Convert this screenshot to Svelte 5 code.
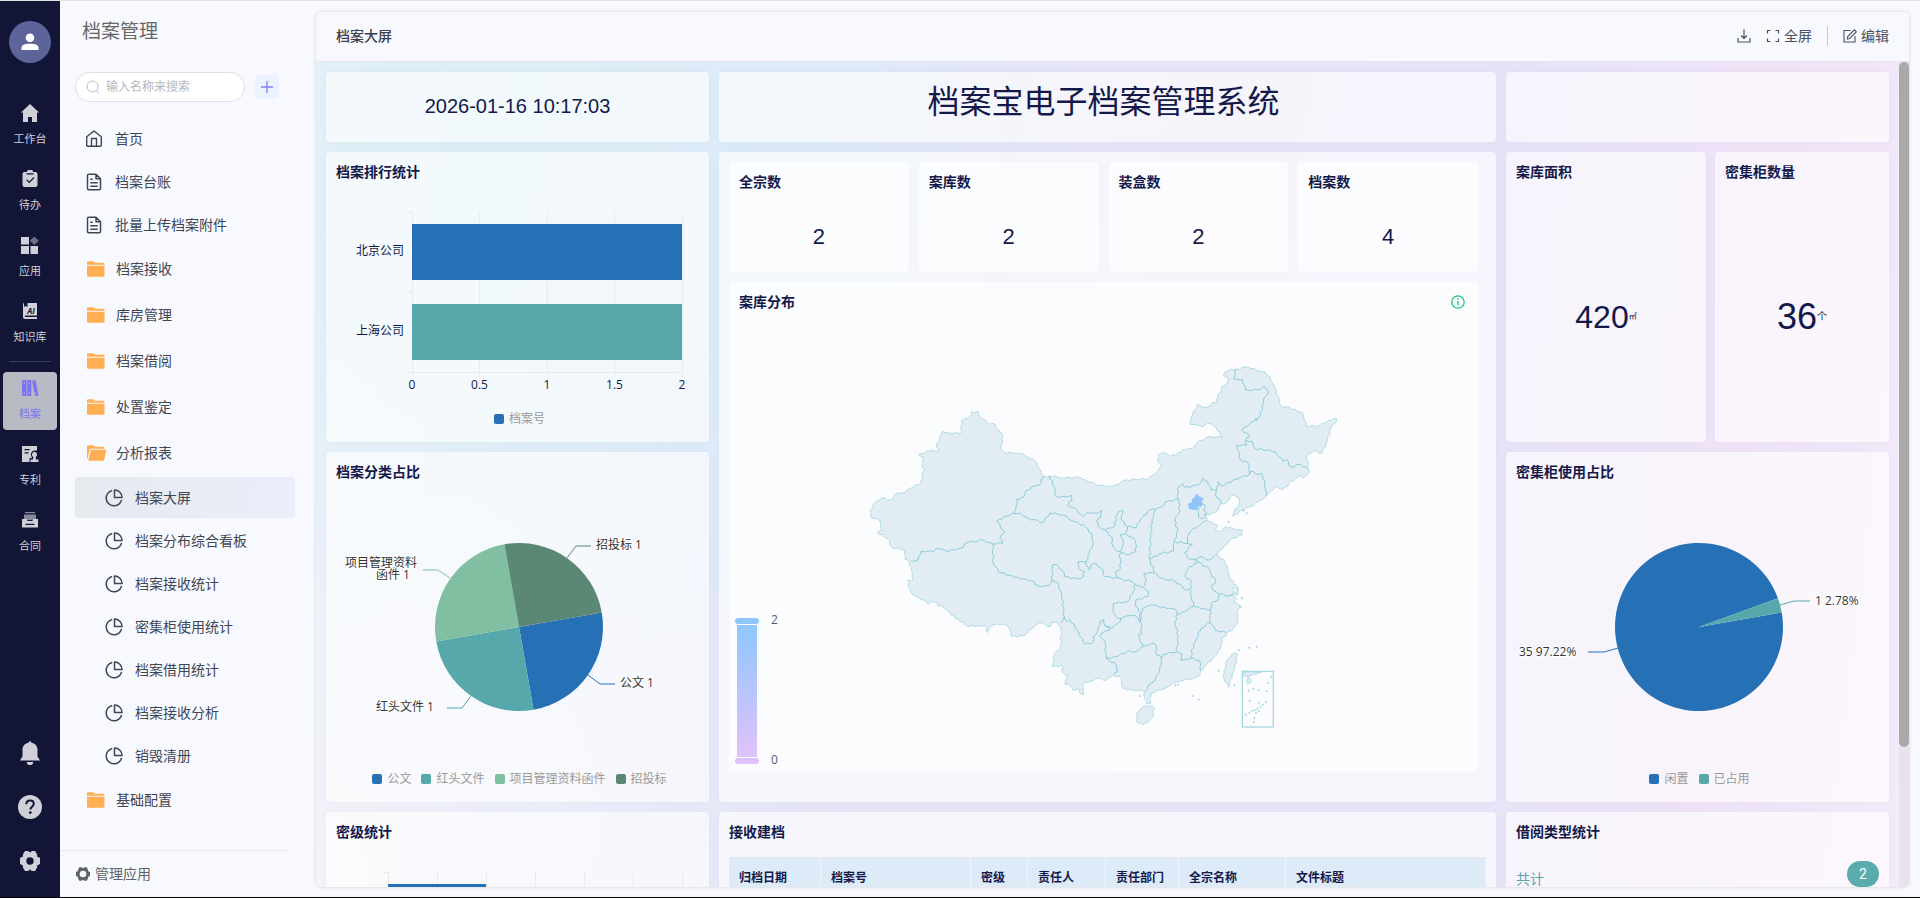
<script>
  let keyword = $state('');
  let activeItem = $state('档案大屏');

  const rail = [
    { label: '工作台', icon: 'house' },
    { label: '待办', icon: 'todo' },
    { label: '应用', icon: 'apps' },
    { label: '知识库', icon: 'book' },
    { divider: true },
    { label: '档案', icon: 'archive', active: true },
    { label: '专利', icon: 'patent' },
    { label: '合同', icon: 'contract' },
  ];

  const menu = [
    { label: '首页', icon: 'home' },
    { label: '档案台账', icon: 'doc' },
    { label: '批量上传档案附件', icon: 'doc' },
    { label: '档案接收', icon: 'folder', folder: true },
    { label: '库房管理', icon: 'folder', folder: true },
    { label: '档案借阅', icon: 'folder', folder: true },
    { label: '处置鉴定', icon: 'folder', folder: true },
    { label: '分析报表', icon: 'folderOpen', folder: true },
    { label: '档案大屏', icon: 'pie', child: true },
    { label: '档案分布综合看板', icon: 'pie', child: true },
    { label: '档案接收统计', icon: 'pie', child: true },
    { label: '密集柜使用统计', icon: 'pie', child: true },
    { label: '档案借用统计', icon: 'pie', child: true },
    { label: '档案接收分析', icon: 'pie', child: true },
    { label: '销毁清册', icon: 'pie', child: true },
    { label: '基础配置', icon: 'folder', folder: true },
  ];

  const counts = [
    { label: '全宗数', value: 2 },
    { label: '案库数', value: 2 },
    { label: '装盒数', value: 2 },
    { label: '档案数', value: 4 },
  ];

  const BLUE = '#2671b6';
  const TEAL = '#56a8aa';
  const GREEN = '#81bfa2';
  const DARK = '#5b8875';

  const bars = [
    { label: '北京公司', value: 2, color: BLUE },
    { label: '上海公司', value: 2, color: TEAL },
  ];

  const typePie = {
    slices: [
      { from: -10, to: 80, color: BLUE, line: '262,183 274,192 289,192', texts: [[294, 195, '公文 1']] },
      { from: 80, to: 170, color: TEAL, line: '145,204 136,216 121,216', texts: [[50, 219, '红头文件 1']] },
      { from: 170, to: 260, color: GREEN, line: '124,86 112,78 97,78', texts: [[19, 75, '项目管理资料'], [50, 87, '函件 1']] },
      { from: 260, to: 350, color: DARK, line: '241,66 250,54 265,54', texts: [[270, 57, '招投标 1']] },
    ],
    legend: [['公文', BLUE], ['红头文件', TEAL], ['项目管理资料函件', GREEN], ['招投标', DARK]],
  };

  const cabinetPie = {
    slices: [
      { from: -10, to: 340, color: BLUE, line: '112,156 98,160 82,160', texts: [[13, 164, '35 97.22%']] },
      { from: 340, to: 350, color: TEAL, line: '274,113 288,109 304,109', texts: [[309, 113, '1 2.78%']] },
    ],
    legend: [['闲置', BLUE], ['已占用', TEAL]],
  };

  const columns = [
    ['归档日期', 92], ['档案号', 150], ['密级', 57], ['责任人', 78],
    ['责任部门', 73], ['全宗名称', 107], ['文件标题', 200],
  ];

  function slicePath(s, cx = 193, cy = 135, r = 84) {
    const p = (deg) => {
      const a = (deg * Math.PI) / 180;
      return `${(cx + r * Math.cos(a)).toFixed(2)} ${(cy + r * Math.sin(a)).toFixed(2)}`;
    };
    const large = s.to - s.from > 180 ? 1 : 0;
    return `M${cx} ${cy}L${p(s.from)}A${r} ${r} 0 ${large} 1 ${p(s.to)}Z`;
  }

  // breaks long straight edges into small uneven steps, so borders look natural
  function rough(str, close = false) {
    const n = str.split(/[ ,]+/).map(Number);
    const pts = [];
    for (let i = 0; i < n.length; i += 2) pts.push([n[i], n[i + 1]]);
    if (close) pts.push(pts[0]);
    let d = `M${pts[0]}`;
    for (let i = 1; i < pts.length; i++) {
      const [ax, ay] = pts[i - 1];
      const [bx, by] = pts[i];
      const len = Math.hypot(bx - ax, by - ay);
      const steps = Math.max(1, Math.round(len / 9));
      for (let k = 1; k < steps; k++) {
        const t = k / steps;
        const off = Math.sin(ax * 3.1 + by * 1.7 + k * 2.3) * 3;
        d += `L${(ax + (bx - ax) * t - ((by - ay) / len) * off).toFixed(1)} ${(ay + (by - ay) * t + ((bx - ax) / len) * off).toFixed(1)}`;
      }
      d += `L${bx} ${by}`;
    }
    return close ? d + 'Z' : d;
  }

  const outline = rough(
    '60 482 70 463 88 450 105 443 112 452 130 447 136 433 155 430 180 415 213 400 217 375 225 360 217 345 218 320 206 313 240 303 266 303 259 290 268 268 278 244 300 250 334 248 334 212 345 204 360 202 363 186 384 184 386 195 400 208 412 218 436 224 447 243 458 255 458 280 452 295 460 305 490 310 520 312 540 326 556 333 560 348 572 362 581 379 598 378 640 384 690 382 712 393 735 402 772 411 795 405 830 390 895 386 915 372 935 350 923 335 926 315 940 308 955 316 978 317 998 299 1030 294 1042 277 1080 260 1117 262 1110 245 1092 228 1072 219 1058 230 1040 224 1018 222 1028 195 1043 163 1055 170 1070 172 1086 159 1102 158 1103 143 1118 108 1134 97 1133 82 1120 76 1135 62 1158 57 1195 50 1220 60 1245 66 1260 80 1274 115 1285 140 1293 168 1335 177 1360 193 1368 228 1405 229 1435 211 1460 207 1452 222 1442 235 1432 272 1416 309 1390 302 1370 316 1376 358 1372 375 1358 385 1352 375 1335 385 1316 402 1300 418 1276 410 1262 424 1248 438 1232 450 1213 465 1190 472 1168 485 1148 499 1152 487 1168 462 1168 445 1155 436 1140 440 1130 458 1114 461 1100 485 1080 493 1065 490 1070 512 1092 522 1104 527 1097 540 1110 545 1125 530 1148 535 1177 541 1177 555 1150 563 1125 585 1110 600 1098 613 1125 635 1135 665 1142 690 1160 706 1164 728 1150 712 1145 722 1165 733 1143 735 1160 745 1150 755 1170 768 1162 780 1165 800 1158 825 1150 835 1130 850 1115 868 1112 895 1090 925 1075 938 1056 962 1050 975 1030 985 1000 992 980 995 955 1010 930 1020 903 1028 903 1040 895 1045 902 1060 890 1062 884 1045 884 1025 870 1020 830 1020 815 1005 815 985 790 975 770 990 745 985 720 995 703 995 697 1010 702 1033 690 1031 684 1015 668 1020 660 1007 646 1003 650 975 638 968 635 945 608 950 613 915 633 890 633 840 620 815 606 815 600 830 572 818 550 830 520 858 484 859 480 840 468 825 442 821 420 830 412 848 405 825 380 830 345 825 325 808 303 795 300 785 250 755 235 763 220 750 190 735 178 715 173 690 190 690 185 660 178 635 165 628 163 600 125 592 112 565 82 548 96 540 88 510 65 504',
    true
  );

  const borders = [
    '183 633 205 630 215 603 250 605 265 595 290 604 330 595 355 577 400 570 428 582',
    '428 582 458 580 450 562 463 548 440 512 490 490',
    '490 490 498 470 500 448 522 440 530 420 555 408 575 400 572 390 581 379',
    '598 378 612 410 614 430 627 443 665 436 667 450 653 465 680 480 700 500 712 487 735 490 755 482 752 495 740 515 745 530 765 540',
    '765 540 795 528 797 500 805 486 818 482 815 510 832 530 827 550 810 555 820 575 812 605 795 598 785 580 785 560 765 540',
    '832 530 860 532 870 510 900 480 917 478 935 470 945 457 985 447',
    '827 550 858 572 857 605 838 613 810 610 812 655 797 665 803 683',
    '490 490 515 493 535 505 580 517 600 488 640 495 665 512 700 525 725 550 730 580 718 610 708 635 683 637 687 655 705 665 700 680 683 687 645 680 635 660 620 643 608 645 606 690',
    '428 582 430 640 445 665 495 682 545 692 570 712 598 706 606 690',
    '708 635 715 660 730 640 755 655 765 680 797 683 845 695 855 702',
    '606 690 620 695 635 730 643 800 633 820',
    '643 800 650 815 660 808 680 840 705 883 728 878 730 860 742 845 750 815 762 808 765 828',
    '855 702 850 725 832 755 790 760 788 785 805 805 835 797 855 797 868 815 872 790 858 770 858 750 893 740 893 722 880 712 855 702',
    '880 712 890 690 882 670 914 668',
    '914 668 898 627 903 560 905 510 917 478',
    '898 627 935 610 970 603 973 575 983 545 975 510 990 485 985 447',
    '985 447 982 415 998 400 1003 413 1045 405 1060 385 1073 395 1083 420 1100 422 1104 395 1117 408 1155 388 1198 373',
    '1100 422 1098 440 1108 447 1112 461',
    '1198 373 1203 363 1218 373 1235 370 1245 400 1248 438',
    '1198 373 1195 340 1172 330 1160 285 1190 287 1187 270',
    '1187 270 1208 275 1215 295 1275 305 1300 335 1310 328 1322 352 1352 343 1376 358',
    '1187 270 1200 258 1176 240 1200 222 1218 205 1220 212 1238 180 1240 150 1255 125 1240 110 1225 120 1187 120 1178 90 1150 85 1158 57',
    '1070 512 1045 528 1030 535 1012 560 1012 580 1028 582 1003 608 1018 627 1030 628 1050 620 1078 630 1098 613',
    '973 575 1012 580',
    '1030 628 1040 640 1018 650 1005 678 1025 695 1020 718 1025 740 1030 770 1080 780 1090 755 1105 750 1108 732',
    '914 668 930 685 975 693 1010 720 1020 718',
    '1108 732 1085 715 1098 688 1085 680 1075 652 1058 648 1040 628',
    '1108 732 1135 738 1150 728',
    '872 790 878 775 905 765 950 775 975 778 982 792 1000 785 1030 770',
    '982 792 975 815 985 860 980 905 995 910 992 930 1022 925',
    '1080 780 1080 815 1095 840 1128 848',
    '1080 818 1053 835 1040 865 1030 885 1022 925 1048 932 1052 962',
    '980 905 940 912 935 925 920 915 918 885 905 880 878 890',
    '872 790 875 850 865 855 878 890 862 905 830 905 800 920 768 925',
    '768 925 765 875 750 860 760 848 780 840 765 828 785 835 805 820 812 805',
    '768 925 800 945 803 965 790 975',
    '935 925 935 945 918 985 903 1000 884 1025',
    '1055 460 1065 465 1060 480 1070 490 1060 505 1045 500 1047 475 1055 460',
  ].map((b) => rough(b)).join('');

  const hainan = rough('880 1070 905 1066 914 1075 905 1105 880 1126 860 1115 860 1088', true);
  const taiwan = rough('1152 909 1162 912 1155 955 1140 990 1136 1012 1122 985 1122 960 1135 925', true);
  const beijing = 'M1040 432l6 8 14 6-6 8 2 12-12 2-4 11-22-3-2-15 12-3-2-9 8-5z';

  const islets = [
    [1190, 490], [1180, 482], [1136, 516], [1172, 770], [1176, 745], [1166, 900], [1198, 893], [1221, 890],
    [1106, 962], [1153, 1006], [1028, 1038], [1046, 1049], [870, 1038], [984, 1004], [976, 1006],
    [1196, 1022], [1210, 1016], [1226, 1020], [1250, 1024], [1255, 1000], [1264, 980], [1199, 1052],
    [1226, 1058], [1248, 1055], [1238, 1064], [1231, 1070], [1222, 1076], [1214, 1080], [1226, 1084],
    [1218, 1088], [1207, 1083], [1198, 1088], [1188, 1094], [1213, 1104], [1211, 1116],
  ];
</script>

{#snippet icon(name)}
  {#if name === 'house'}
    <svg class="ic" width="18" height="18" viewBox="0 0 18 18"><path fill="currentColor" d="M9 0 0 8.6h2V18h5v-5h4v5h5V8.6h2z" /></svg>
  {:else if name === 'todo'}
    <svg class="ic" width="18" height="18" viewBox="0 0 18 18"><path fill="currentColor" d="M6 1.500A1.500 1.500 0 0 1 7.500 0h3A1.500 1.500 0 0 1 12 1.500V2h2.500A2 2 0 0 1 16.500 4v11a2 2 0 0 1-2 2h-11a2 2 0 0 1-2-2V4a2 2 0 0 1 2-2H6z" /><path d="M5.500 3.800h7M5.500 9.700l2.700 2.800 4.800-5" fill="none" stroke="#121536" stroke-width="1.200" /></svg>
  {:else if name === 'apps'}
    <svg class="ic" width="18" height="18" viewBox="0 0 18 18"><path fill="currentColor" d="M0 1h8v7.500H0zM0 10h8v8H0zM9.500 10H17v8H9.500z" /><path fill="#6d6f8a" d="m13.300.5 4.500 4.200-4.500 4.200L8.800 4.700z" /></svg>
  {:else if name === 'book'}
    <svg class="ic" width="18" height="18" viewBox="0 0 18 18"><path fill="currentColor" d="M2 2.500C2 1.600 2.500 1 3 1v4l1.700-1L6.500 5V1H16v12.500H4.500c-1 0-1 1.500 0 1.500H16v2H4c-1.200 0-2-.8-2-2z" /><text x="10" y="12" text-anchor="middle" font-size="8" font-weight="700" font-style="italic" fill="#121536">AI</text></svg>
  {:else if name === 'archive'}
    <svg class="ic" width="18" height="18" viewBox="0 0 18 18"><path fill="currentColor" fill-rule="evenodd" d="M1 1h4.500v16H1zM2.500 3.500v1.200H4V3.500zm0 10v1.200H4v-1.200zM6.300 1h4v16h-4zm1.300 2.500v1.200H9V3.500zm0 10v1.200H9v-1.200zM11 1.700 14.400 1 17.500 16.400 14 17zm2.700 11.800.3 1.300 1.200-.2-.3-1.300z" /></svg>
  {:else if name === 'patent'}
    <svg class="ic" width="18" height="18" viewBox="0 0 18 18"><path fill="currentColor" fill-rule="evenodd" d="M1 1h15v4.500h-2.500a4 4 0 0 0-3.300 5.500l.8 2H8.500v4H1zM3.500 4v1.300h5V4zm0 3.300v1.300h4V7.300z" /><path fill="currentColor" d="M13.500 6.800a2.800 2.800 0 0 1 1.200 5.200l.3 2.500h2.500V17h-8v-2.500H12l.3-2.500a2.800 2.800 0 0 1 1.200-5.200z" /></svg>
  {:else if name === 'contract'}
    <svg class="ic" width="18" height="18" viewBox="0 0 18 18"><path fill="#85879b" d="M4 1h10v1.300H4zM3 3.500h12V9H3z" /><path fill="currentColor" fill-rule="evenodd" d="M1 8h4.500l1.200 2h4.600l1.200-2H17v8.500H1zm3.500 4.800V14h9v-1.200z" /></svg>
  {:else if name === 'home'}
    <svg class="ic" width="18" height="18" viewBox="0 0 18 18" fill="none" stroke="currentColor" stroke-width="1.400" stroke-linejoin="round"><path d="M1.700 6.700 9 1l7.300 5.700v8.600a1 1 0 0 1-1 1H2.700a1 1 0 0 1-1-1zM6.500 16V8.500h5V16" /></svg>
  {:else if name === 'doc'}
    <svg class="ic" width="18" height="18" viewBox="0 0 18 18" fill="none" stroke="currentColor" stroke-width="1.500" stroke-linejoin="round"><path d="M11 1.200H3.800a1.300 1.300 0 0 0-1.300 1.300v13a1.300 1.300 0 0 0 1.300 1.300h10.400a1.300 1.300 0 0 0 1.300-1.300V5.700zM11 1.200v4.500h4.500M5.300 6.200h2.500M5.300 9.700h7.400M5.300 13.200h7.400" /></svg>
  {:else if name === 'folder'}
    <svg class="ic" width="18" height="18" viewBox="0 0 18 18"><path fill="#ffae52" d="M0 2.200a1 1 0 0 1 1-1h5l2 1.600h8.500a1 1 0 0 1 1 1v.9H0zM0 5.800h17.500v10a1 1 0 0 1-1 1H1a1 1 0 0 1-1-1z" /></svg>
  {:else if name === 'folderOpen'}
    <svg class="ic" width="18" height="18" viewBox="0 0 18 18" overflow="visible"><path fill="#ffae52" d="M0 2.200a1 1 0 0 1 1-1h5l2 1.600h8.500a1 1 0 0 1 1 1v.9H3L.6 14.500 0 15zM4 5.800h15.500l-2.600 11H1.200z" /></svg>
  {:else if name === 'pie'}
    <svg class="ic" width="18" height="18" viewBox="0 0 18 18" fill="none" stroke="currentColor" stroke-width="1.500"><path d="M7.200 1.400a7.800 7.800 0 1 0 9.400 9.400" /><path stroke-linejoin="round" d="M9.500 1a7.600 7.600 0 0 1 7.600 7.600H9.500z" /></svg>
  {/if}
{/snippet}

{#snippet pieChart(chart)}
  <svg class="chart" viewBox="0 0 383 270">
    {#each chart.slices as s}
      <path d={slicePath(s)} fill={s.color} />
      <polyline points={s.line} fill="none" stroke={s.color} />
      <text class="pie-label">
        {#each s.texts as [x, y, text]}<tspan {x} {y}>{text}</tspan>{/each}
      </text>
    {/each}
  </svg>
  {@render legend(chart.legend)}
{/snippet}

{#snippet legend(items)}
  <ul class="legend">
    {#each items as [label, color]}
      <li><i style="background: {color}"></i>{label}</li>
    {/each}
  </ul>
{/snippet}

<div class="app">
  <nav class="rail">
    <button class="avatar" aria-label="用户">
      <svg width="18" height="18" viewBox="0 0 18 18" fill="#fff"><circle cx="9" cy="4.700" r="4.300" /><path d="M.5 17v-2c0-3 3-4.200 8.500-4.200s8.500 1.200 8.500 4.200v2z" /></svg>
    </button>
    {#each rail as item}
      {#if item.divider}
        <hr />
      {:else}
        <a class="rail-item" class:active={item.active} href="#{item.icon}">
          {@render icon(item.icon)}
          <span>{item.label}</span>
        </a>
      {/if}
    {/each}
    <div class="rail-tools">
      <button aria-label="通知">
        <svg width="24" height="24" viewBox="0 0 24 24" fill="currentColor"><path d="M10.800 1.500a1.200 1.200 0 0 1 2.400 0c4 .8 6.300 3.700 6.300 7.500v6.500l2.500 4H2l2.500-4V9c0-3.800 2.300-6.700 6.300-7.500zM8.800 21h6.400a3.200 3.200 0 0 1-6.400 0z" /></svg>
      </button>
      <button aria-label="帮助">
        <svg width="24" height="24" viewBox="0 0 24 24"><circle cx="12" cy="12" r="12" fill="currentColor" /><path d="M8.300 9.200c0-2.300 1.600-3.800 3.800-3.800s3.700 1.400 3.700 3.400c0 2.700-3.500 3-3.500 5.700" fill="none" stroke="#121536" stroke-width="2" /><circle cx="12.300" cy="17.600" r="1.400" fill="#121536" /></svg>
      </button>
      <button aria-label="设置">
        <svg width="24" height="24" viewBox="0 0 24 24"><path fill="currentColor" fill-rule="evenodd" d="M7 2h3l2 1.500L14 2h3l2 3.300.3 2.500 2.700 1V15l-2.700 1.200-.3 2.500L17 22h-3l-2-1.500L10 22H7l-2-3.300-.3-2.500L2 15V8.800l2.700-1L5 5.300zm5 6.300a3.700 3.700 0 1 0 0 7.400 3.700 3.700 0 0 0 0-7.400z" /></svg>
      </button>
    </div>
  </nav>

  <aside class="sidebar">
    <h1>档案管理</h1>
    <div class="search-row">
      <label class="search">
        <svg width="14" height="14" viewBox="0 0 14 14" fill="none" stroke="#b4b8c2"><circle cx="6.500" cy="6.500" r="5.500" /><path d="m10.500 10.500 2.500 2.500" /></svg>
        <input type="text" placeholder="输入名称来搜索" aria-label="搜索" bind:value={keyword} />
      </label>
      <button class="add" aria-label="新增">
        <svg width="14" height="14" viewBox="0 0 14 14" stroke="#7f80f0" stroke-width="1.300"><path d="M7 1v12M1 7h12" /></svg>
      </button>
    </div>
    <div class="menu">
      {#each menu as item}
        <a
          href="#menu"
          class="menu-item"
          class:folder={item.folder}
          class:child={item.child}
          class:active={item.child && item.label === activeItem}
          onclick={() => (activeItem = item.label)}
        >
          {@render icon(item.icon)}<span>{item.label}</span>
        </a>
      {/each}
    </div>
    <button class="manage">
      <svg width="16" height="16" viewBox="0 0 24 24"><path fill="currentColor" fill-rule="evenodd" d="M6.500 2h3.200L12 3.500 14.300 2h3.200L19.500 5.500l.3 2.500 2.700 1v6l-2.700 1.200-.3 2.500L17.500 22h-3.200L12 20.500 9.700 22H6.500l-2-3.300-.3-2.500L1.500 15V9l2.700-1 .3-2.500zM12 7a5 5 0 1 0 0 10 5 5 0 0 0 0-10z" /></svg>
      管理应用
    </button>
  </aside>

  <main class="panel">
    <header class="panel-head">
      <h2>档案大屏</h2>
      <button aria-label="下载">
        <svg width="14" height="14" viewBox="0 0 14 14" fill="none" stroke="currentColor" stroke-width="1.200"><path d="M7 .5v9M4 6.500l3 3 3-3M1 9v4h12V9" /></svg>
      </button>
      <button class="full">
        <svg width="14" height="14" viewBox="0 0 14 14" fill="none" stroke="currentColor" stroke-width="1.200"><path d="M1.500 4.500v-3h3M9.500 1.500h3v3M12.500 9.500v3h-3M4.500 12.500h-3v-3" /></svg>
        全屏
      </button>
      <span class="sep"></span>
      <button>
        <svg width="14" height="14" viewBox="0 0 14 14" fill="none" stroke="currentColor" stroke-width="1.100"><path d="M7.500 1.500H1v11.500h11V7M4.300 10l.4-2.500 6.600-6.600 2 2-6.600 6.600z" /></svg>
        编辑
      </button>
    </header>

    <div class="viewport">
      <div class="board">
        <section class="card banner clock"><time datetime="2026-01-16T10:17:03">2026-01-16 10:17:03</time></section>
        <section class="card banner system">档案宝电子档案管理系统</section>
        <section class="card banner"></section>

        <section class="card rank">
          <h3>档案排行统计</h3>
          <svg class="chart" viewBox="0 0 383 210">
            {#each [0, 0.5, 1, 1.5, 2] as tick}
              <path class="grid-line" d="M{Math.floor(86 + tick * 135) + 0.5} 20V185" />
              <text class="axis" x={86 + tick * 135} y="197" text-anchor="middle">{tick}</text>
            {/each}
            <path class="grid-line" d="M81 20.500h5M81 100.500h5M81 180.500h276" />
            {#each bars as bar, i}
              <rect x="86" y={32 + i * 80} width={bar.value * 135} height="56" fill={bar.color} />
              <text class="axis" x="78" y={63 + i * 80} text-anchor="end">{bar.label}</text>
            {/each}
          </svg>
          {@render legend([['档案号', BLUE]])}
        </section>

        <section class="card center">
          <div class="counts">
            {#each counts as c}
              <div class="card inner count">
                <h3>{c.label}</h3>
                <p>{c.value}</p>
              </div>
            {/each}
          </div>
          <div class="card inner map">
            <div class="map-head">
              <h3>案库分布</h3>
              <svg width="14" height="14" viewBox="0 0 14 14" fill="none" stroke="#1ec878" stroke-width="1.300"><circle cx="7" cy="7" r="6.200" /><path d="M7 3.300v1.400M7 6v4.500" /></svg>
            </div>
            <svg class="chart" viewBox="0 0 749 450">
              <defs>
                <linearGradient id="scale" x1="0" y1="0" x2="0" y2="1">
                  <stop offset="0" stop-color="#8fc7fd" />
                  <stop offset="1" stop-color="#dfc2fb" />
                </linearGradient>
              </defs>
              <rect x="8" y="303" width="20" height="132" fill="url(#scale)" />
              <rect x="6" y="296" width="24" height="6" rx="3" fill="#8fc7fd" />
              <rect x="6" y="436" width="24" height="6" rx="3" fill="#dfc2fb" />
              <text class="scale" x="42" y="302">2</text>
              <text class="scale" x="42" y="442">0</text>
              <g transform="translate(121 28) scale(.33333)">
                <g class="land">
                  <path d={outline} />
                  <path d={hainan} />
                  <path d={taiwan} />
                  <path d="M1179 966h56l-24 8-14 2v8l6 6-2 8-8 3-4-8 5-6v-7l-14-3z" />
                </g>
                <path class="borders" d={borders} />
                <path d={beijing} fill="#8fc4fc" stroke="#7db9f5" stroke-width="2" />
                {#each islets as [x, y]}
                  <circle cx={x} cy={y} r="3" fill="#a3d5de" />
                {/each}
                <rect x="1177" y="964" width="93" height="167" fill="none" stroke="#a9d9e2" stroke-width="4" />
              </g>
            </svg>
          </div>
        </section>

        <div class="pair">
          <section class="card figure">
            <h3>案库面积</h3>
            <p class="area">420<small>㎡</small></p>
          </section>
          <section class="card figure">
            <h3>密集柜数量</h3>
            <p class="cabinets">36<small>个</small></p>
          </section>
        </div>

        <section class="card">
          <h3>档案分类占比</h3>
          {@render pieChart(typePie)}
        </section>

        <section class="card">
          <h3>密集柜使用占比</h3>
          {@render pieChart(cabinetPie)}
        </section>

        <section class="card">
          <h3>密级统计</h3>
          <svg class="chart" viewBox="0 0 383 210">
            {#each [0, 1, 2, 3, 4, 5, 6] as i}
              <path class="grid-line" d="M{62 + i * 49}.500 20V185" />
            {/each}
            <path class="grid-line" d="M57 20.500h5" />
            <rect x="62" y="32" width="98" height="56" fill={BLUE} />
          </svg>
        </section>

        <section class="card">
          <h3>接收建档</h3>
          <div class="table-wrap">
            <table>
              <thead>
                <tr>
                  {#each columns as [label, width]}
                    <th style="width: {(width / 757) * 100}%">{label}</th>
                  {/each}
                </tr>
              </thead>
            </table>
          </div>
        </section>

        <section class="card">
          <h3>借阅类型统计</h3>
          <div class="total">
            <span>共计</span>
            <b>2</b>
          </div>
        </section>
      </div>
      <div class="scrollbar"><div class="thumb"></div></div>
    </div>
  </main>
</div>

<style>
  :global(body) { margin: 0; background: #f7f9fe; }

  * { box-sizing: border-box; }
  h1, h2, h3, p, ul { margin: 0; padding: 0; font-weight: 400; }
  button { background: none; border: none; padding: 0; font: inherit; color: inherit; cursor: pointer; }
  a { color: inherit; text-decoration: none; }
  .ic { flex: none; display: block; }

  .app {
    display: flex; height: 100vh;
    border-top: 1px solid #dfe2e2; border-bottom: 1px solid #000;
    background: #f7f9fe;
    font-family: "Open Sans", "Noto Sans CJK SC", sans-serif;
    font-size: 14px; line-height: 20px; color: #3f4654;
  }

  /* rail */
  .rail {
    width: 60px; flex: none; display: flex; flex-direction: column; align-items: center;
    padding: 20px 3px 24px; background: #121536; color: #cfd0d8;
  }
  .avatar {
    width: 42px; height: 42px; margin-bottom: 34px; border-radius: 50%; background: #5c649a;
    display: flex; align-items: center; justify-content: center;
  }
  .rail-item {
    width: 54px; height: 58px; margin-bottom: 8px; padding-top: 7px; border-radius: 4px;
    display: flex; flex-direction: column; align-items: center; gap: 7px;
    font-size: 11px;
  }
  .rail-item.active { background: #b9bbc4; color: #7b74f2; }
  .rail hr { width: 42px; height: 1px; margin: 0 0 10px; border: none; background: #3b3e5c; }
  .rail-tools { margin-top: auto; display: flex; flex-direction: column; gap: 30px; }
  .rail-tools button { height: 24px; }
  .rail-tools svg { display: block; }

  /* sidebar */
  .sidebar { width: 255px; flex: none; display: flex; flex-direction: column; }
  h1 { padding: 14px 22px 0; font-size: 19px; line-height: 32px; color: #666; }
  .search-row { display: flex; align-items: center; gap: 10px; padding: 25px 15px 0; }
  .search {
    width: 170px; height: 30px; display: flex; align-items: center; gap: 6px; padding: 0 10px;
    border: 1px solid #dcdfe6; border-radius: 15px; background: #fff;
  }
  .search svg { flex: none; }
  .search input {
    flex: 1; min-width: 0; border: none; outline: none; background: none; padding: 0;
    font: inherit; font-size: 12px; color: inherit;
  }
  .search input::placeholder { color: #b4b8c2; opacity: 1; }
  .add {
    width: 24px; height: 24px; border-radius: 4px; background: #eaf3ff;
    display: flex; align-items: center; justify-content: center;
  }
  .menu { flex: 1; min-height: 0; overflow: hidden; display: flex; flex-direction: column; padding: 15px 20px 0 15px; }
  .menu-item {
    display: flex; align-items: center; flex: none; gap: 12px; height: 41px; margin: 1px 0;
    padding-left: 10px; border-radius: 3px;
  }
  .menu-item.folder { height: 46px; margin: 0; padding-left: 12px; gap: 11px; }
  .menu-item.child { padding-left: 30px; }
  .menu-item.active { background: linear-gradient(100deg, #e6e9ee, #ebeefa); }
  .manage {
    display: flex; align-items: center; gap: 4px; height: 47px; margin-right: 25px; padding-left: 15px;
    border-top: 1px solid #e6e8ee; color: #5f6368;
  }

  /* panel */
  .panel {
    flex: 1; min-width: 0; display: flex; flex-direction: column; margin: 10px 10px 9px 0;
    border: 1px solid #e6e8ec; border-radius: 6px; overflow: hidden;
    box-shadow: 0 0 4px rgba(0, 0, 0, 0.06);
  }
  .panel-head {
    display: flex; align-items: center; height: 50px; flex: none; padding: 0 20px 2px;
    border-bottom: 1px solid #e6e6ea; color: #4a5160;
  }
  h2 { flex: 1; font-size: 14px; font-weight: 500; color: #3a404c; }
  .panel-head button { display: flex; align-items: center; gap: 4px; }
  .panel-head .full { margin-left: 15px; }
  .sep { width: 1px; height: 20px; margin: 0 15px; background: #c8cad0; }

  .viewport {
    flex: 1; min-height: 0; display: flex; overflow: hidden;
    background:
      radial-gradient(ellipse 30% 60% at 12% 14%, rgba(218, 238, 242, 0.6), rgba(218, 238, 242, 0)),
      radial-gradient(ellipse 30% 70% at 0% 100%, rgba(246, 243, 250, 0.9), rgba(246, 243, 250, 0)),
      radial-gradient(ellipse 45% 70% at 40% 100%, rgba(233, 230, 247, 0.9), rgba(233, 230, 247, 0)),
      linear-gradient(97deg, #e6f2fa 0%, #deeafa 26%, #e6e4f5 48%, #e7e3f7 72%, #f0e3f7 86%, #f4ebfa 100%);
  }
  .board {
    flex: 1; min-width: 0; display: grid; align-content: start; gap: 10px; padding: 10px;
    grid-template-columns: 383fr 777fr 383fr;
    grid-template-rows: 70px 290px 350px 260px;
  }
  .scrollbar { width: 10px; background: rgba(220, 215, 225, 0.5); }
  .thumb { height: 83%; border-radius: 5px; background: #a9a9a9; }

  .card {
    min-width: 0; border-radius: 4px; background: rgba(255, 255, 255, 0.62); color: #14194a;
    box-shadow: 0 0 8px rgba(60, 80, 120, 0.04);
  }
  .card h3 { padding: 0 10px; font-size: 14px; font-weight: 700; line-height: 40px; }
  .chart { display: block; width: 100%; height: auto; }

  .banner { display: flex; align-items: center; justify-content: center; font-family: "Liberation Sans", "Noto Sans CJK SC", sans-serif; }
  .clock { padding-bottom: 2px; font-size: 20px; }
  .system { padding: 0 8px 10px 0; font-size: 32px; }

  .center { grid-row: 2 / 4; grid-column: 2; padding: 10px 18px 0 10px; }
  .counts { display: grid; grid-template-columns: repeat(4, 1fr); gap: 10px; margin-bottom: 10px; }
  .inner { box-shadow: none; }
  .count { height: 110px; text-align: center; }
  .count h3 { text-align: left; }
  .count p { font: 22px/70px "Liberation Sans", sans-serif; }
  .map-head { display: flex; align-items: center; justify-content: space-between; padding-right: 13px; }
  .land { fill: #e1edf3; stroke: #b2dbe4; stroke-width: 3; stroke-linejoin: round; }
  .borders { fill: none; stroke: #8ccbd8; stroke-width: 3; stroke-linejoin: round; }

  .pair { display: grid; grid-template-columns: 200fr 174fr; gap: 9px; }
  .figure { display: flex; flex-direction: column; }
  .figure p {
    flex: 1; display: flex; align-items: center; justify-content: center;
    font-family: "Liberation Sans", "Noto Sans CJK SC", sans-serif;
  }
  .area { font-size: 32px; }
  .area small { font-size: 8px; }
  .cabinets { font-size: 36px; }
  .cabinets small { font-size: 10px; }

  .grid-line { fill: none; stroke: #ebebee; }
  .axis { font-size: 12px; fill: #14194a; }
  .scale { font-size: 12px; fill: #555b6e; }
  .pie-label { font-size: 12px; fill: #333; stroke: #fff; stroke-width: 2px; paint-order: stroke; }

  .legend {
    display: flex; justify-content: center; gap: 10px; padding-left: 4px; list-style: none;
    font-size: 12px; line-height: 34px; color: #999;
  }
  .legend li { display: flex; align-items: center; gap: 5px; }
  .legend i { width: 10px; height: 10px; border-radius: 2px; }

  .table-wrap { padding: 5px 10px 0; }
  table { width: 100%; table-layout: fixed; border-collapse: separate; border-spacing: 0; background: #ddeaf8; }
  th {
    height: 40px; padding: 0 10px; border-top: 1px solid #e3e8f0; border-right: 1px solid #f0f5fb;
    font-size: 12px; text-align: left; white-space: nowrap; overflow: hidden;
  }

  .total { display: flex; align-items: flex-start; justify-content: space-between; padding: 9px 10px; }
  .total span { padding-top: 8px; color: #56a8aa; }
  .total b {
    width: 32px; height: 26px; border-radius: 13px; background: #5aabad; color: #fff;
    font: 14px/26px Roboto, sans-serif; text-align: center;
  }
</style>
